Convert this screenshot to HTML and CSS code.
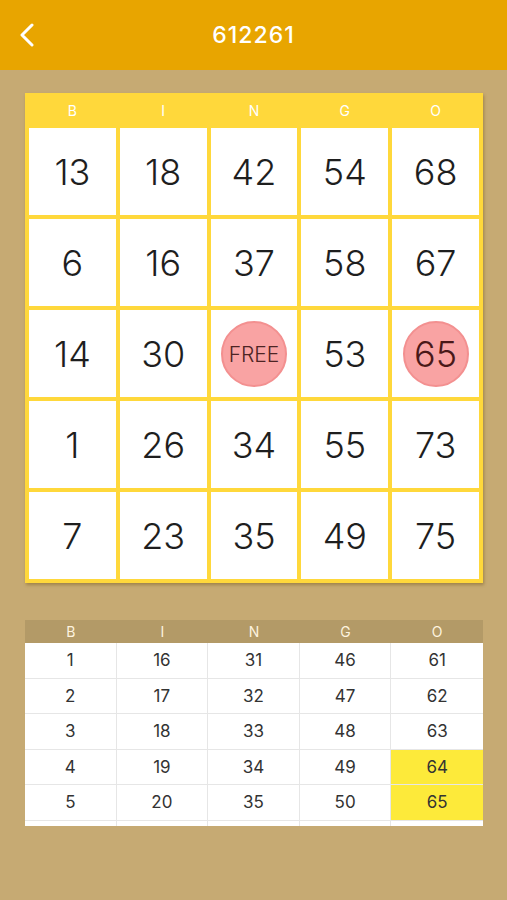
FILE: index.html
```html
<!DOCTYPE html>
<html lang="en">
<head>
    <meta charset="UTF-8">
    <meta name="viewport" content="width=device-width, initial-scale=1.0">
    <title>612261</title>
    <link rel="stylesheet" href="styles.css">
</head>
<body>
    <header class="navbar">
        <svg class="back" width="16" height="24" viewBox="0 0 16 24">
            <path d="M13 2 L3 12 L13 22" fill="none" stroke="#fff" stroke-width="3" stroke-linecap="round" stroke-linejoin="round"/>
        </svg>
        <h1 class="title">612261</h1>
    </header>

    <main class="content">
        <div class="card">
            <div class="card-head">
                <span>B</span><span>I</span><span>N</span><span>G</span><span>O</span>
            </div>
            <div class="grid">
                <div class="cell">13</div>
                <div class="cell">18</div>
                <div class="cell">42</div>
                <div class="cell">54</div>
                <div class="cell">68</div>

                <div class="cell">6</div>
                <div class="cell">16</div>
                <div class="cell">37</div>
                <div class="cell">58</div>
                <div class="cell">67</div>

                <div class="cell">14</div>
                <div class="cell">30</div>
                <div class="cell"><span class="mark free">FREE</span></div>
                <div class="cell">53</div>
                <div class="cell"><span class="mark">65</span></div>

                <div class="cell">1</div>
                <div class="cell">26</div>
                <div class="cell">34</div>
                <div class="cell">55</div>
                <div class="cell">73</div>

                <div class="cell">7</div>
                <div class="cell">23</div>
                <div class="cell">35</div>
                <div class="cell">49</div>
                <div class="cell">75</div>
            </div>
        </div>

        <div class="called">
            <div class="called-head">
                <span>B</span><span>I</span><span>N</span><span>G</span><span>O</span>
            </div>
            <div class="called-body">
                <div class="row"><span>1</span><span>16</span><span>31</span><span>46</span><span>61</span></div>
                <div class="row"><span>2</span><span>17</span><span>32</span><span>47</span><span>62</span></div>
                <div class="row"><span>3</span><span>18</span><span>33</span><span>48</span><span>63</span></div>
                <div class="row"><span>4</span><span>19</span><span>34</span><span>49</span><span class="hit">64</span></div>
                <div class="row"><span>5</span><span>20</span><span>35</span><span>50</span><span class="hit">65</span></div>
                <!-- next row is scrolled out of view, only its top edge shows -->
                <div class="row"><span></span><span></span><span></span><span></span><span></span></div>
            </div>
        </div>
    </main>
</body>
</html>
```

FILE: styles.css
```css
body {
    margin: 0;
    background: #c6aa73;
    font-family: Inter, "Open Sans", sans-serif;
    color: #222;
}
.navbar {
    height: 70px;
    background: #e8a500;
    display: flex;
    align-items: center;
    justify-content: center;
    position: relative;
}
.back {
    position: absolute;
    left: 19px;
    top: 23px;
}
.title {
    margin: 0;
    color: #fff;
    font-size: 23px;
    font-weight: 500;
    letter-spacing: 1px;
}
.content {
    padding: 23px 24px 0 25px;
}
.card {
    background: #ffd83b;
    padding: 0 4px 4px 4px;
    box-shadow: 1px 2px 3px rgba(90, 60, 0, 0.35);
}
.card-head {
    height: 35px;
    display: grid;
    grid-template-columns: repeat(5, 1fr);
    gap: 4px;
    align-items: center;
    text-align: center;
    color: #fff;
    font-size: 14px;
}
.grid {
    display: grid;
    grid-template-columns: repeat(5, 1fr);
    grid-auto-rows: 87px;
    gap: 4px;
}
.cell {
    background: #fff;
    display: flex;
    align-items: center;
    justify-content: center;
    font-size: 36px;
    font-weight: 300;
    color: #1e1e1e;
    padding-top: 1px;
}
.mark {
    width: 62px;
    height: 62px;
    border-radius: 50%;
    background: #f9a3a3;
    border: 2px solid #f39090;
    display: flex;
    align-items: center;
    justify-content: center;
    color: #4a1818;
}
.mark.free {
    font-size: 21px;
    color: #4d2424;
}
.called {
    margin-top: 37px;
    width: 458px;
}
.called-head {
    height: 23px;
    background: #b39a67;
    display: grid;
    grid-template-columns: repeat(5, 1fr);
    align-items: center;
    text-align: center;
    color: #fdf3df;
    font-size: 14px;
}
.called-body {
    height: 183px;
    overflow: hidden;
    background: #fff;
}
.row {
    display: grid;
    grid-template-columns: repeat(5, 1fr);
    height: 35.5px;
    box-sizing: border-box;
    border-bottom: 1px solid #e6e6e6;
}
.row span {
    display: flex;
    align-items: center;
    justify-content: center;
    font-size: 17px;
    color: #333;
    border-right: 1px solid #e6e6e6;
}
.row span:last-child {
    border-right: none;
}
.row .hit {
    background: #fdea3a;
}
```
